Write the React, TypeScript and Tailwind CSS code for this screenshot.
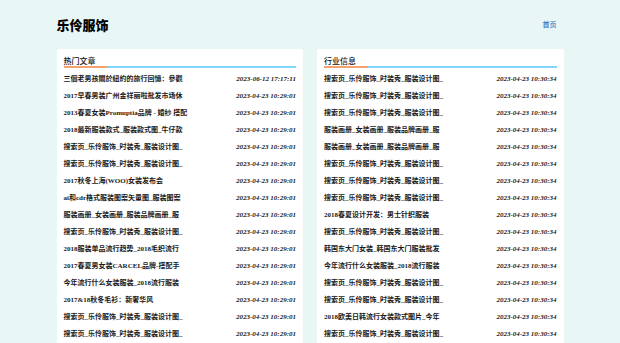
import React from 'react';

interface Item {
  title: string;
  time: string;
}

const SEARCH = '搜索页_乐伶服饰_时装秀_服装设计图_';
const ALBUM = '服装画册_女装画册_服装品牌画册_服';

const hot: Item[] = [
  { title: '三個老男孩關於紐約的旅行回憶：參觀', time: '2023-06-12 17:17:11' },
  { title: '2017早春男装广州金祥丽啦批发市场休', time: '2023-04-23 10:29:01' },
  { title: '2013春夏女装Promuptia品牌 - 婚纱 搭配', time: '2023-04-23 10:29:01' },
  { title: '2018最新服装款式_服装款式图_牛仔款', time: '2023-04-23 10:29:01' },
  { title: SEARCH, time: '2023-04-23 10:29:01' },
  { title: SEARCH, time: '2023-04-23 10:29:01' },
  { title: '2017秋冬上海(WOO)女装发布会', time: '2023-04-23 10:29:01' },
  { title: 'ai和cdr格式服装图案矢量图_服装图案', time: '2023-04-23 10:29:01' },
  { title: ALBUM, time: '2023-04-23 10:29:01' },
  { title: SEARCH, time: '2023-04-23 10:29:01' },
  { title: '2018服装单品流行趋势_2018毛织流行', time: '2023-04-23 10:29:01' },
  { title: '2017春夏男女装CARCEL品牌-搭配手', time: '2023-04-23 10:29:01' },
  { title: '今年流行什么女装服装_2018流行服装', time: '2023-04-23 10:29:01' },
  { title: '2017&18秋冬毛衫：新奢华风', time: '2023-04-23 10:29:01' },
  { title: SEARCH, time: '2023-04-23 10:29:01' },
  { title: SEARCH, time: '2023-04-23 10:29:01' },
];

const news: Item[] = [
  SEARCH,
  SEARCH,
  SEARCH,
  ALBUM,
  ALBUM,
  SEARCH,
  SEARCH,
  SEARCH,
  '2018春夏设计开发：男士针织服装',
  SEARCH,
  '韩国东大门女装_韩国东大门服装批发',
  '今年流行什么女装服装_2018流行服装',
  SEARCH,
  SEARCH,
  '2018欧美日韩流行女装款式图片_今年',
  SEARCH,
].map((title) => ({ title, time: '2023-04-23 10:30:34' }));

const Panel: React.FC<{ heading: string; items: Item[] }> = ({ heading, items }) => (
  <div className="bg-white rounded-[3px] px-[7px] pt-[6px] pb-[6px]">
    <div className="flex flex-col">
      <span className="text-[8px] leading-[11px] text-[#111] font-medium font-['Noto_Sans_CJK_SC',sans-serif]">
        {heading}
      </span>
      <div className="flex h-[2px]">
        <div className="w-[44px] bg-[#f5a36c]" />
        <div className="flex-1 bg-[#80d7ff]" />
      </div>
    </div>
    <ul className="mt-[3px]">
      {items.map((item, i) => (
        <li key={i} className="flex items-center justify-between h-[17px]">
          <span className="text-[7px] font-bold text-[#1a1a1a] whitespace-nowrap font-['Liberation_Serif','Noto_Sans_CJK_SC',serif]">
            {item.title}
          </span>
          <span className="text-[7px] font-bold italic text-[#1a1a1a] whitespace-nowrap font-['Liberation_Serif',serif]">
            {item.time}
          </span>
        </li>
      ))}
    </ul>
  </div>
);

export default function App() {
  return (
    <div className="min-h-screen bg-[#e9f6f6]">
      <div className="w-[507px] mx-auto">
        <header className="flex items-center justify-between h-[49px]">
          <h1 className="text-[13px] font-black text-black font-['Noto_Sans_CJK_SC',sans-serif]">
            乐伶服饰
          </h1>
          <a className="text-[7px] font-medium text-[#2f72c0] mr-[7px] font-['Noto_Sans_CJK_SC',sans-serif]">首页</a>
        </header>
        <div className="grid grid-cols-2 gap-[14px]">
          <Panel heading="热门文章" items={hot} />
          <Panel heading="行业信息" items={news} />
        </div>
      </div>
    </div>
  );
}
